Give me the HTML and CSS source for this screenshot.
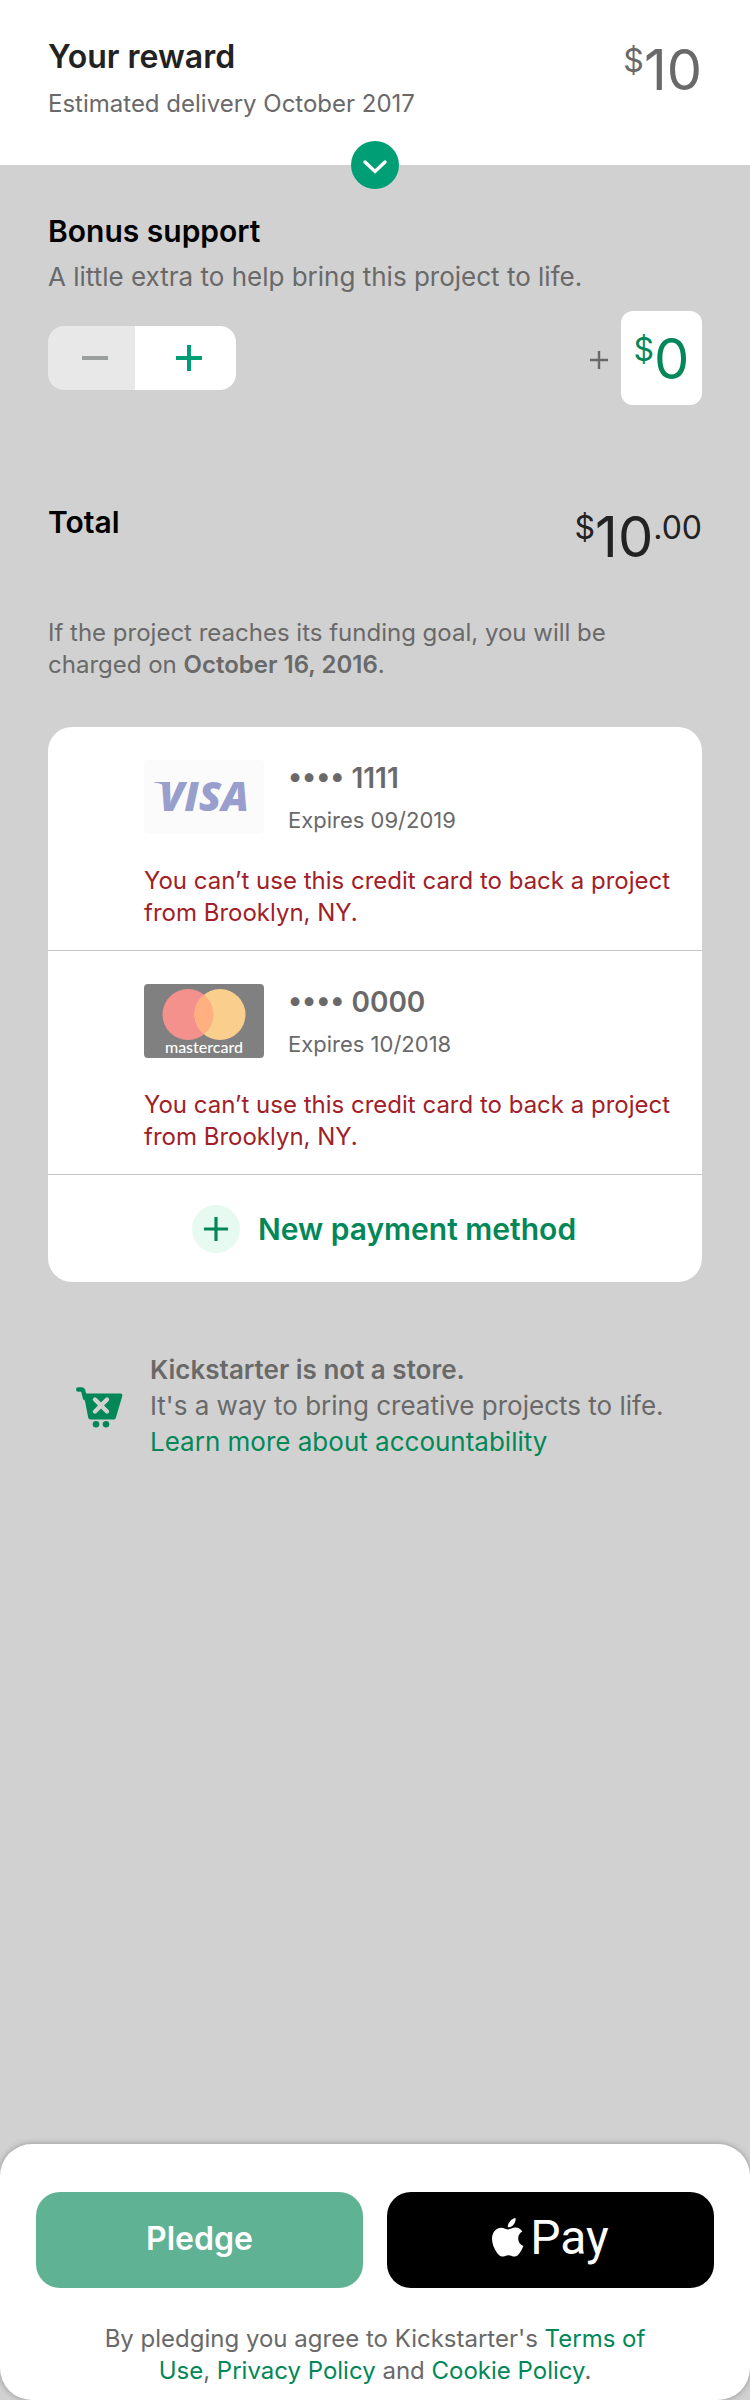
FILE: index.html
```html
<!DOCTYPE html>
<html lang="en">
<head>
<meta charset="utf-8">
<meta name="viewport" content="width=device-width, initial-scale=1">
<title>Your reward</title>
<link rel="stylesheet" href="styles.css">
</head>
<body>
<header class="reward">
  <div>
    <h1 class="reward-title">Your reward</h1>
    <p class="reward-delivery">Estimated delivery October 2017</p>
  </div>
  <p class="amount"><span class="amount-small">$</span>10</p>
  <button class="expand" type="button" aria-label="Show reward details">
    <svg width="48" height="48" viewBox="0 0 48 48" fill="none" stroke="#fff" stroke-width="3.4" stroke-linecap="round"><path d="M14 21 24 30.500 34 21"/></svg>
  </button>
</header>

<main class="content">
  <section class="bonus">
    <h2 class="heading">Bonus support</h2>
    <p class="bonus-text">A little extra to help bring this project to life.</p>
    <div class="bonus-row">
      <div class="stepper">
        <button class="step step-minus" type="button" aria-label="Decrease" disabled>
          <svg width="28" height="28" viewBox="0 0 28 28" stroke="currentColor" stroke-width="4"><path d="M1 14H27"/></svg>
        </button>
        <button class="step step-plus" type="button" aria-label="Increase">
          <svg width="28" height="28" viewBox="0 0 28 28" stroke="currentColor" stroke-width="4"><path d="M1 14H27M14 1V27"/></svg>
        </button>
      </div>
      <div class="bonus-field">
        <svg width="18" height="22" viewBox="0 -4 18 22" stroke="#696969" stroke-width="2.4" aria-hidden="true"><path d="M0 9H18M9 0V18"/></svg>
        <label class="bonus-box"><span class="amount-small">$</span><input class="bonus-input" type="text" inputmode="numeric" value="0" aria-label="Bonus amount"></label>
      </div>
    </div>
  </section>

  <section class="total">
    <h2 class="heading">Total</h2>
    <p class="amount amount-total"><span class="amount-small">$</span>10<span class="amount-small">.00</span></p>
  </section>

  <p class="notice">If the project reaches its funding goal, you will be charged on <strong>October 16, 2016</strong>.</p>

  <section class="payments" aria-label="Payment methods">
    <article class="method">
      <svg class="method-logo" width="120" height="74" viewBox="0 0 120 74" role="img" aria-label="Visa">
        <rect width="120" height="74" rx="4" fill="#fbfbfb"/>
        <path d="M10 22H26L25 30Q20 23 10 22.500Z" fill="#989fcd"/>
        <text class="visa" x="60" y="51" text-anchor="middle">VISA</text>
      </svg>
      <div class="method-info">
        <h3 class="method-number">•••• 1111</h3>
        <p class="method-expiry">Expires 09/2019</p>
      </div>
      <p class="method-error">You can’t use this credit card to back a project from Brooklyn, NY.</p>
    </article>
    <article class="method">
      <svg class="method-logo" width="120" height="74" viewBox="0 0 120 74" role="img" aria-label="Mastercard">
        <rect width="120" height="74" rx="4" fill="#808080"/>
        <circle cx="44" cy="30.500" r="25.500" fill="#f5918d"/>
        <circle cx="76" cy="30.500" r="25.500" fill="#facf8e"/>
        <path d="M60 10.650a25.500 25.500 0 0 1 0 39.700a25.500 25.500 0 0 1 0-39.700Z" fill="#ffaf80"/>
        <text class="mastercard" x="60" y="69" text-anchor="middle">mastercard</text>
      </svg>
      <div class="method-info">
        <h3 class="method-number">•••• 0000</h3>
        <p class="method-expiry">Expires 10/2018</p>
      </div>
      <p class="method-error">You can’t use this credit card to back a project from Brooklyn, NY.</p>
    </article>
    <button class="new-method" type="button">
      <svg width="48" height="48" viewBox="0 0 48 48" stroke="#028858" stroke-width="3.200" aria-hidden="true"><circle cx="24" cy="24" r="24" fill="#e6faf1" stroke="none"/><path d="M12 24H36M24 12V36"/></svg>
      New payment method
    </button>
  </section>

  <section class="store">
    <svg class="store-icon" width="48" height="46" viewBox="0 -4 48 46" aria-hidden="true">
      <path d="M2.200 2.500H5.500Q7 2.500 7.400 4.500L9 11" fill="none" stroke="#028858" stroke-width="4.400" stroke-linecap="round" stroke-linejoin="round"/>
      <path d="M7.500 6.500H44.500Q47 6.500 46.300 9L39.800 31Q39.300 32.500 37.600 32.500H14.500Q12.600 32.500 12.200 30.600Z" fill="#028858"/>
      <path d="M19 12.500 31 24.500M31 12.500 19 24.500" stroke="#d1d1d1" stroke-width="4.400" stroke-linecap="round"/>
      <circle cx="20" cy="37.300" r="3.300" fill="#028858"/>
      <circle cx="30" cy="37.300" r="3.300" fill="#028858"/>
    </svg>
    <div class="store-text">
      <h3 class="store-title">Kickstarter is not a store.</h3>
      <p>It's a way to bring creative projects to life.</p>
      <a class="link" href="#accountability">Learn more about accountability</a>
    </div>
  </section>
</main>

<footer class="checkout">
  <div class="checkout-buttons">
    <button class="pay-button pledge" type="button">Pledge</button>
    <button class="pay-button apple-pay" type="button" aria-label="Apple Pay">
      <svg width="32" height="39" viewBox="0 0 32 39" fill="#fff" aria-hidden="true">
        <path d="M23.500 0C24 3.300 22.600 5.600 21 7.300C19.500 8.900 17.500 9.500 15.800 9.300C15.700 6.600 16.800 4.500 18.300 2.900C19.700 1.400 21.700 .3 23.500 0Z"/>
        <path d="M30.300 13.600C27.600 15.300 26.200 17.500 26.200 20.400C26.200 24 28.300 26.700 31.300 27.900C30.500 30.400 29.300 32.500 27.800 34.700C26.300 36.800 24.800 38.600 22.600 38.600C20.200 38.600 19.500 37.200 16.500 37.200C13.600 37.200 12.700 38.600 10.300 38.600C8 38.600 6.300 36.700 4.800 34.500C2 30.500 0 25.600 0 20.800C0 13.800 4.500 9.700 9.300 9.700C12 9.700 14.400 11.500 16.200 11.500C17.900 11.500 20.400 9.600 23.500 9.600C26.300 9.700 28.700 11.100 30.300 13.600Z"/>
      </svg>
      <span class="apple-pay-text">Pay</span>
    </button>
  </div>
  <p class="terms">By pledging you agree to Kickstarter's <a class="link" href="#terms">Terms of Use</a>, <a class="link" href="#privacy">Privacy Policy</a> and <a class="link" href="#cookies">Cookie Policy</a>.</p>
</footer>
</body>
</html>
```
FILE: styles.css
```css
* { box-sizing: border-box; }

body {
  margin: 0;
  min-height: 100vh;
  display: flex;
  flex-direction: column;
  background: #d1d1d1;
  color: #696969;
  font: 24px/32px Inter, "Liberation Sans", sans-serif;
}

h1, h2, h3, p { margin: 0; font-weight: 400; }
svg { display: block; flex: none; }
button, input { font: inherit; color: inherit; border: 0; padding: 0; background: none; }
.link { color: #028858; text-decoration: none; }

.reward {
  position: relative;
  display: flex;
  justify-content: space-between;
  align-items: flex-start;
  padding: 37px 48px 45px;
  background: #fff;
}
.reward-title { margin-bottom: 11px; font-size: 32px; line-height: 40px; font-weight: 600; color: #222; }
.expand {
  position: absolute;
  left: 50%;
  bottom: 0;
  width: 48px;
  height: 48px;
  border-radius: 50%;
  background: #009e74;
  transform: translate(-50%, 50%);
}

.amount { display: flex; align-items: flex-start; margin-top: 5px; font-size: 56px; line-height: 56px; }
.amount-small { font-size: 32px; line-height: 38px; }
.amount-total { color: #222; }

.content { padding: 48px 48px 40px; }
.heading { font-size: 30px; line-height: 36px; font-weight: 600; color: #000; }
.bonus-text { margin-top: 10px; font-size: 26px; line-height: 36px; }
.bonus-row { display: flex; justify-content: space-between; align-items: center; margin-top: 16px; }
.stepper { display: flex; height: 64px; border-radius: 16px; overflow: hidden; }
.step { display: flex; align-items: center; }
.step-minus { padding: 0 26px 0 33px; background: #e8e8e8; color: #9b9f9d; }
.step-plus { padding: 0 33px 0 40px; background: #fff; color: #009e74; }
.bonus-field { display: flex; align-items: center; gap: 13px; }
.bonus-box {
  display: flex;
  align-items: flex-start;
  padding: 20px 12px 18px;
  border-radius: 12px;
  background: #fff;
  color: #028858;
}
.bonus-input { width: 36px; height: 56px; font-size: 56px; line-height: 56px; outline: 0; }

.total { display: flex; justify-content: space-between; align-items: flex-start; margin-top: 99px; }
.notice { max-width: 600px; margin-top: 52px; }
.notice strong { font-weight: 600; }

.payments { margin-top: 46px; border-radius: 24px; background: #fff; overflow: hidden; }
.method {
  display: grid;
  grid-template-columns: auto 1fr;
  column-gap: 24px;
  padding: 33px 24px 21px 96px;
  border-bottom: 1px solid #c4c4c4;
}
.method-number { font-size: 28px; line-height: 36px; font-weight: 600; }
.method-expiry { margin-top: 10px; font-size: 22px; line-height: 28px; }
.method-error { grid-column: 1 / -1; margin-top: 31px; color: #a12027; }
.visa { font: italic 800 41px "Open Sans", sans-serif; fill: #989fcd; }
.mastercard { font: 500 16px Lato, sans-serif; fill: #fff; }
.new-method {
  display: flex;
  width: 100%;
  align-items: center;
  justify-content: center;
  gap: 18px;
  padding: 30px 24px 29px 42px;
  font-size: 30px;
  font-weight: 600;
  color: #028858;
}

.store { display: flex; align-items: center; gap: 26px; margin-top: 70px; padding-left: 28px; font-size: 26px; line-height: 36px; }
.store-title { font-size: 26px; font-weight: 600; }

.checkout {
  margin-top: auto;
  padding: 48px 36px 13px;
  border-radius: 32px;
  background: #fff;
  box-shadow: 0 0 6px rgba(0, 0, 0, .3);
}
.checkout-buttons { display: grid; grid-template-columns: 1fr 1fr; gap: 24px; }
.pay-button { display: flex; align-items: center; justify-content: center; height: 96px; border-radius: 24px; color: #fff; }
.pledge { padding-bottom: 2px; background: #60b295; font-size: 32px; font-weight: 600; }
.apple-pay { gap: 6px; padding-bottom: 6px; background: #000; }
.apple-pay-text { padding-top: 2px; font: 48px/48px Roboto, sans-serif; }
.terms { max-width: 560px; margin: 35px auto 0; text-align: center; }
```
